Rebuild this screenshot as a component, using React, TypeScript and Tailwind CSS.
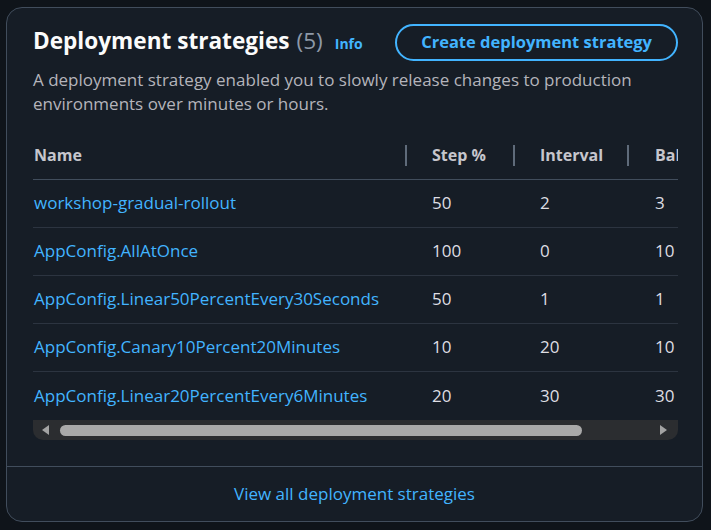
export default function App() {
  const strategies = [
    { name: 'workshop-gradual-rollout', step: '50', interval: '2', bake: '3' },
    { name: 'AppConfig.AllAtOnce', step: '100', interval: '0', bake: '10' },
    { name: 'AppConfig.Linear50PercentEvery30Seconds', step: '50', interval: '1', bake: '1' },
    { name: 'AppConfig.Canary10Percent20Minutes', step: '10', interval: '20', bake: '10' },
    { name: 'AppConfig.Linear20PercentEvery6Minutes', step: '20', interval: '30', bake: '30' },
  ]

  return (
    <div className="min-h-screen bg-[#0f141a] pl-[6px] pr-[8px] pt-[7px] pb-[8px] font-['Open_Sans',sans-serif]">
      <div className="rounded-2xl border border-[#414d5c] bg-[#161d26]">
        {/* Header */}
        <div className="pl-[26px] pr-[24px] pt-[16px]">
          <div className="flex items-center justify-between">
            <h2 className="flex items-baseline text-[22.6px] leading-[30px] font-bold text-[#fbfbfb]">
              Deployment strategies
              <span className="ml-[7px] font-normal text-[#8d99a8]">(5)</span>
              <span className="ml-[12px] text-[14px] font-bold text-[#42b4ff]">Info</span>
            </h2>
            <button className="h-[37px] rounded-full border-2 border-[#42b4ff] px-[24px] text-[16.5px] font-bold text-[#42b4ff]">
              Create deployment strategy
            </button>
          </div>
          <p className="mt-[7px] text-[17px] leading-[24px] text-[#b4b4bb]">
            A deployment strategy enabled you to slowly release changes to production environments over minutes or hours.
          </p>
        </div>

        {/* Table */}
        <div className="mt-[19px] ml-[26px] mr-[24px] overflow-hidden">
          <table className="w-[900px] table-fixed border-collapse text-left text-[17px]">
            <colgroup>
              <col className="w-[372px]" />
              <col className="w-[108px]" />
              <col className="w-[114px]" />
              <col className="w-[306px]" />
            </colgroup>
            <thead>
              <tr className="h-[44px] border-b border-[#414d5c] text-[16px]">
                <th className="pl-[1px] pb-[4px] font-bold text-[#c6c6cd]">Name</th>
                <th className="relative pl-[27px] pb-[4px] font-bold text-[#c6c6cd]">
                  <span className="absolute left-0 top-[10px] h-[21px] w-[1.5px] bg-[#5f6b7a]" />
                  Step %
                </th>
                <th className="relative pl-[27px] pb-[4px] font-bold text-[#c6c6cd]">
                  <span className="absolute left-0 top-[10px] h-[21px] w-[1.5px] bg-[#5f6b7a]" />
                  Interval
                </th>
                <th className="relative pl-[28px] pb-[4px] font-bold text-[#c6c6cd]">
                  <span className="absolute left-0 top-[10px] h-[21px] w-[1.5px] bg-[#5f6b7a]" />
                  Bake time
                </th>
              </tr>
            </thead>
            <tbody>
              {strategies.map((s, idx) => (
                <tr key={idx} className={idx < strategies.length - 1 ? 'h-[48px] border-b border-[#2c3440]' : 'h-[48px]'}>
                  <td className="pl-[1px] text-[#42b4ff]">{s.name}</td>
                  <td className="pl-[27px] text-[#dedee3]">{s.step}</td>
                  <td className="pl-[27px] text-[#dedee3]">{s.interval}</td>
                  <td className="pl-[28px] text-[#dedee3]">{s.bake}</td>
                </tr>
              ))}
            </tbody>
          </table>
        </div>

        {/* Scrollbar */}
        <div className="mt-[1px] ml-[26px] mr-[24px] flex h-[20px] items-center rounded-b-[10px] bg-[#2b2d30] pl-[8px] pr-[10px]">
          <svg width="10" height="10" viewBox="0 0 10 10" className="shrink-0">
            <path d="M8 0 L8 10 L1 5 Z" fill="#a3a3a3" />
          </svg>
          <div className="ml-[9px] h-[11px] w-[522px] rounded-full bg-[#a9a9a9]" />
          <svg width="10" height="10" viewBox="0 0 10 10" className="ml-auto shrink-0">
            <path d="M2 0 L2 10 L9 5 Z" fill="#a3a3a3" />
          </svg>
        </div>

        {/* Footer */}
        <div className="mt-[26px] flex h-[55px] items-center justify-center border-t border-[#414d5c] text-[17px] text-[#42b4ff]">
          View all deployment strategies
        </div>
      </div>
    </div>
  )
}
